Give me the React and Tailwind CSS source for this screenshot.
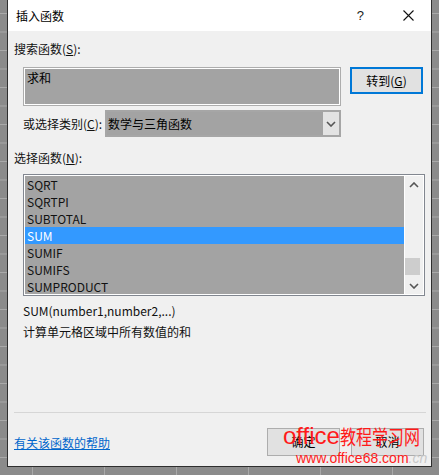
import React from 'react';

const FONT = { fontFamily: '"Microsoft YaHei", "Noto Sans CJK SC", "Noto Sans", sans-serif' };

const items = ['SQRT', 'SQRTPI', 'SUBTOTAL', 'SUM', 'SUMIF', 'SUMIFS', 'SUMPRODUCT'];

function Chevron({ up, className }) {
  return (
    <svg width="10" height="6" viewBox="0 0 10 6" className={className}>
      <polyline
        points={up ? '1,5 5,1 9,5' : '1,1 5,5 9,1'}
        fill="none"
        stroke="#555"
        strokeWidth="1.6"
      />
    </svg>
  );
}

export default function App() {
  return (
    <div
      className="relative w-[439px] h-[475px] overflow-hidden bg-[#8b8b8b] bg-[linear-gradient(#a9a9a9_1px,transparent_1px),linear-gradient(90deg,#a9a9a9_1px,transparent_1px)] bg-[size:72px_18.5px] bg-[position:32px_13px] text-[12px] text-[#111]"
      style={FONT}
    >
      <div className="ml-[7px] w-[425px] h-[467px] border-l border-r border-b border-[#2e2e2e] bg-[#f0f0f0] flex flex-col">
        {/* title bar */}
        <div className="h-[31px] bg-white flex items-center pl-[8px] shrink-0">
          <span className="text-[12px] text-black">插入函数</span>
          <span className="ml-auto mr-[39px] text-[13px] text-[#222]" style={{ fontFamily: '"Liberation Sans", sans-serif' }}>?</span>
          <svg width="11" height="11" viewBox="0 0 11 11" className="mr-[17px]">
            <path d="M0.5 0.5 L10.5 10.5 M10.5 0.5 L0.5 10.5" stroke="#111" strokeWidth="1.1" />
          </svg>
        </div>

        <div className="pl-[6px] pr-[7px] pt-[9px] flex flex-col">
          <div className="leading-[17px]">
            搜索函数(<span className="underline">S</span>):
          </div>

          <div className="mt-[10px] ml-[9px] flex items-start">
            <div className="w-[318px] h-[39px] border border-[#adadad] p-px bg-white">
              <div className="w-full h-full bg-[#a3a3a3] pl-[2px] leading-[17px] text-black">求和</div>
            </div>
            <button className="ml-[9px] w-[73px] h-[27px] border-2 border-[#0078d7] bg-[#e1e1e1] text-[12px] text-black leading-none">
              转到(<span className="underline">G</span>)
            </button>
          </div>

          <div className="mt-[4px] ml-[9px] flex items-center h-[27px]">
            <span className="w-[82px] whitespace-nowrap">
              或选择类别(<span className="underline">C</span>):
            </span>
            <div className="w-[236px] h-[27px] border-2 border-[#a6a6a6] bg-[#a3a3a3] flex items-center">
              <span className="pl-[1px] text-black">数学与三角函数</span>
              <div className="ml-auto w-[16px] h-full bg-[#e3e3e3] flex items-center justify-center">
                <Chevron />
              </div>
            </div>
          </div>

          <div className="mt-[12px] leading-[17px]">
            选择函数(<span className="underline">N</span>):
          </div>

          <div className="mt-[8px] ml-[9px] w-[402px] h-[122px] border border-[#828790] bg-white p-px flex">
            <div className="flex-1 bg-[#a3a3a3] flex flex-col">
              {items.map((it) => (
                <div
                  key={it}
                  className={`h-[17px] leading-[17px] pl-[2px] ${it === 'SUM' ? 'bg-[#3399ff] text-white' : 'text-[#111]'}`}
                >
                  {it}
                </div>
              ))}
            </div>
            <div className="w-[18px] ml-px bg-[#f0f0f0] flex flex-col items-center">
              <div className="h-[17px] flex items-center justify-center">
                <Chevron up />
              </div>
              <div className="flex-1 w-full flex flex-col justify-end pb-[2px]">
                <div className="w-[15px] h-[17px] bg-[#cdcdcd]" />
              </div>
              <div className="h-[17px] flex items-center justify-center">
                <Chevron />
              </div>
            </div>
          </div>

          <div className="mt-[6px] ml-[9px] leading-[17px]">SUM(number1,number2,...)</div>
          <div className="mt-[4px] ml-[9px] leading-[17px]">计算单元格区域中所有数值的和</div>

          <div className="mt-[72px] h-px bg-[#d6d6d6] -mr-[2px]" />

          <div className="mt-[15px] h-[28px] flex items-center">
            <a className="text-[#0066cc] underline leading-[17px]">有关该函数的帮助</a>
            <button className="ml-auto w-[73px] h-[28px] border border-[#adadad] bg-[#e1e1e1] text-[12px] text-black">
              确定
            </button>
            <button className="ml-[11px] w-[73px] h-[28px] border border-[#adadad] bg-[#e1e1e1] text-[12px] text-black">
              取消
            </button>
          </div>
        </div>
      </div>

      {/* watermark */}
      <div className="absolute left-[283px] top-[424px] flex items-end whitespace-nowrap text-[#ff1a1a] leading-none">
        <span className="text-[24px]" style={{ fontFamily: '"Liberation Sans", sans-serif' }}>office</span>
        <span className="inline-block text-[20px] w-[80px] scale-x-[0.8] origin-left pb-[1px]">教程学习网</span>
      </div>
      <div
        className="absolute left-[296px] top-[451px] text-[14px] text-[#ff1a1a] leading-none whitespace-nowrap"
        style={{ fontFamily: '"Liberation Sans", sans-serif' }}
      >
        www.office68.com<span className="text-[#c8c8c8] italic">.cn</span>
      </div>
    </div>
  );
}
